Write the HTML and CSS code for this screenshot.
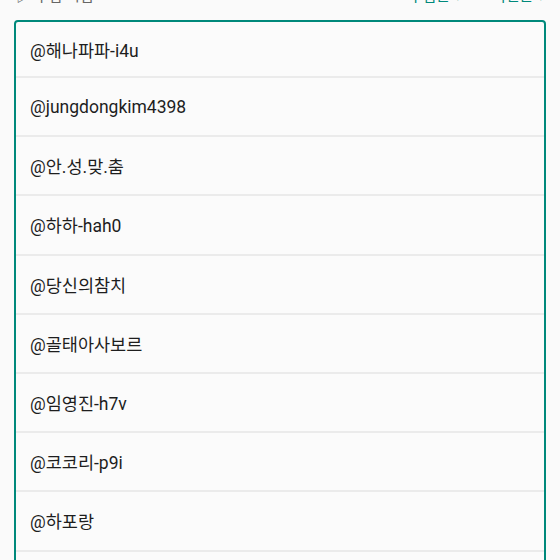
FILE: index.html
```html
<!DOCTYPE html>
<html lang="ko">
<head>
<meta charset="utf-8">
<link rel="stylesheet" href="styles.css">
</head>
<body>
<div class="header">
  <span class="label">▷ 구입 시점</span>
  <div class="sorts">
    <span class="sort">구입순 ▾</span>
    <span class="sort">최신순 ▾</span>
  </div>
</div>
<div class="list">
  <div class="row">@해나파파-i4u</div>
  <div class="row">@jungdongkim4398</div>
  <div class="row">@안.성.맞.춤</div>
  <div class="row">@하하-hah0</div>
  <div class="row">@당신의참치</div>
  <div class="row">@골태아사보르</div>
  <div class="row">@임영진-h7v</div>
  <div class="row">@코코리-p9i</div>
  <div class="row">@하포랑</div>
  <div class="row">@하늘별</div>
</div>
</body>
</html>
```
FILE: styles.css
```css
html, body {
  margin: 0;
  padding: 0;
  background: #fafafa;
  font-family: Roboto, "Noto Sans CJK KR", sans-serif;
  overflow: hidden;
}
.header {
  display: flex;
  justify-content: space-between;
  align-items: flex-end;
  height: 20px;
  margin-top: -14px;
  padding: 0 15px 0 16px;
  font-size: 15px;
  line-height: 20px;
}
.label {
  color: #666;
}
.sorts {
  display: flex;
  gap: 30px;
}
.sort {
  color: #00897b;
}
.list {
  margin: 14px 14px 0 14px;
  border: 2px solid #00897b;
  border-radius: 4px;
  background: #fbfbfb;
  height: 600px;
  overflow: hidden;
}
.row {
  display: flex;
  align-items: center;
  height: 57.2px;
  padding-left: 14px;
  border-bottom: 2px solid #ebebeb;
  font-size: 17.5px;
  color: #1e1e1e;
}
.row:first-child {
  height: 54px;
}
```
